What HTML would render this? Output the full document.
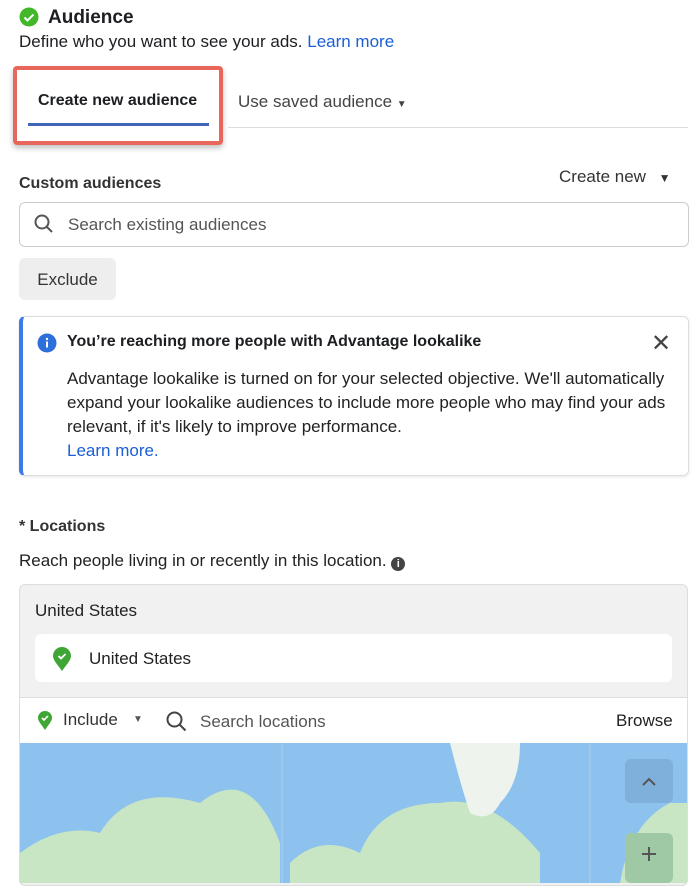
<!DOCTYPE html>
<html><head><style>
body{margin:0;width:700px;height:880px;overflow:hidden;background:#fff;font-family:"Liberation Sans",sans-serif;color:#1c1e21;position:relative}
.a{position:absolute;white-space:nowrap}
</style></head><body>
<svg class="a" style="left:19px;top:7px" width="20" height="20"><circle cx="10" cy="10" r="9.5" fill="#42b72a"/><path d="M5.5 10.5l3 3 6-6" stroke="#fff" stroke-width="2" fill="none"/></svg>
<div class="a" style="left:48px;top:7px;font-size:19px;font-weight:bold">Audience</div>
<div class="a" style="left:19px;top:32px;font-size:17px">Define who you want to see your ads. <span style="color:#1a5fd6">Learn more</span></div>
<div class="a" style="left:228px;top:127px;width:460px;height:1px;background:#dcdcdc"></div>
<div class="a" style="left:13px;top:66px;width:202px;height:71px;border:4px solid #e9675a;border-radius:4px;box-shadow:0 3px 6px rgba(0,0,0,.25)"></div>
<div class="a" style="left:38px;top:92px;font-size:16px;font-weight:bold">Create new audience</div>
<div class="a" style="left:28px;top:123px;width:181px;height:3px;background:#4166b7"></div>
<div class="a" style="left:238px;top:92px;font-size:17px;color:#444">Use saved audience <span style="font-size:10px">▼</span></div>
<div class="a" style="left:19px;top:175px;font-size:16px;font-weight:bold;color:#333">Custom audiences</div>
<div class="a" style="left:559px;top:167px;font-size:17px;color:#333">Create new <span style="font-size:12px;margin-left:8px">▼</span></div>
<div class="a" style="left:19px;top:202px;width:668px;height:43px;border:1px solid #ccc;border-radius:6px"></div>
<svg class="a" style="left:34px;top:214px" width="20" height="20"><circle cx="8" cy="8" r="6.5" stroke="#555" stroke-width="2" fill="none"/><path d="M13 13l5 5" stroke="#555" stroke-width="2"/></svg>
<div class="a" style="left:68px;top:215px;font-size:17px;color:#555">Search existing audiences</div>
<div class="a" style="left:19px;top:258px;width:97px;height:42px;background:#eeeeee;border-radius:6px;font-size:17px;line-height:44px;text-align:center;color:#333">Exclude</div>
<div class="a" style="left:19px;top:316px;width:665px;height:158px;border:1px solid #ddd;border-left:4px solid #3d7be8;border-radius:6px;box-shadow:0 1px 3px rgba(0,0,0,.1)"></div>
<svg class="a" style="left:37px;top:333px" width="20" height="20"><circle cx="10" cy="10" r="9.5" fill="#2d6fdb"/><rect x="9" y="8.5" width="2" height="6" fill="#fff"/><circle cx="10" cy="6" r="1.2" fill="#fff"/></svg>
<div class="a" style="left:67px;top:333px;font-size:16px;font-weight:bold">You’re reaching more people with Advantage lookalike</div>
<div class="a" style="left:651px;top:329px;font-size:24px;color:#444">✕</div>
<div class="a" style="left:67px;top:367px;font-size:17px;line-height:24px;color:#222">Advantage lookalike is turned on for your selected objective. We'll automatically<br>expand your lookalike audiences to include more people who may find your ads<br>relevant, if it's likely to improve performance.<br><span style="color:#1a5fd6">Learn more.</span></div>
<div class="a" style="left:19px;top:518px;font-size:16px;font-weight:bold;color:#333">* Locations</div>
<div class="a" style="left:19px;top:551px;font-size:17px;color:#222">Reach people living in or recently in this location. <span style="display:inline-block;width:14px;height:14px;border-radius:50%;background:#444;color:#fff;font-size:11px;line-height:14px;text-align:center;font-weight:bold;vertical-align:-1px">i</span></div>
<div class="a" style="left:19px;top:584px;width:667px;height:300px;border:1px solid #ddd;border-radius:6px;background:#f1f1f1;overflow:hidden">
 <div class="a" style="left:15px;top:16px;font-size:17px;color:#222">United States</div>
 <div class="a" style="left:15px;top:49px;width:637px;height:48px;background:#fff;border-radius:6px"></div>
 <svg class="a" style="left:31px;top:61px" width="22" height="26"><path d="M11 25C6 18 2 14 2 10a9 9 0 0 1 18 0c0 4-4 8-9 15z" fill="#3fa535"/><path d="M7.5 10l2.5 2.5 4.5-4.5" stroke="#fff" stroke-width="1.8" fill="none"/></svg>
 <div class="a" style="left:69px;top:64px;font-size:17px;color:#222">United States</div>
 <div class="a" style="left:0;top:112px;width:667px;height:45px;background:#fff;border-top:1px solid #ddd;border-bottom:1px solid #ddd"></div>
 <svg class="a" style="left:17px;top:125px" width="16" height="20"><path d="M8 20C4 14 1 11 1 8a7 7 0 0 1 14 0c0 3-3 6-7 12z" fill="#3fa535"/><path d="M5 8l2 2 4-4" stroke="#fff" stroke-width="1.6" fill="none"/></svg>
 <div class="a" style="left:43px;top:125px;font-size:17px;color:#333">Include</div>
 <div class="a" style="left:113px;top:129px;font-size:10px;color:#555">▼</div>
 <svg class="a" style="left:146px;top:126px" width="22" height="22"><circle cx="8.5" cy="8.5" r="7" stroke="#444" stroke-width="2" fill="none"/><path d="M13.5 13.5l6 6" stroke="#444" stroke-width="2"/></svg>
 <div class="a" style="left:180px;top:127px;font-size:17px;color:#555">Search locations</div>
 <div class="a" style="left:596px;top:126px;font-size:17px;color:#222">Browse</div>
 <svg class="a" style="left:0;top:158px" width="667" height="140">
  <rect width="667" height="140" fill="#8ec2ee"/>
  <path d="M0 110 Q40 80 80 90 Q110 40 180 60 Q230 20 260 100 L260 140 L0 140z" fill="#c9e6c4"/>
  <path d="M270 120 Q300 90 340 110 Q360 60 420 60 Q470 50 520 110 L520 140 L270 140z" fill="#c9e6c4"/>
  <path d="M430 0 L500 0 Q500 40 480 60 Q470 80 450 70 Q440 40 430 0z" fill="#eef3ee"/>
  <path d="M600 140 Q610 80 650 60 L667 60 L667 140z" fill="#c9e6c4"/>
  <path d="M262 0 V140 M570 0 V140" stroke="#a9cdef" stroke-width="1"/>
  <rect x="605" y="16" width="48" height="44" rx="6" fill="#7fb0dc"/>
  <path d="M623 42l6-6 6 6" stroke="#555" stroke-width="2" fill="none"/>
  <rect x="605" y="90" width="48" height="50" rx="6" fill="#9fc8a5"/>
  <path d="M629 104v14M622 111h14" stroke="#555" stroke-width="2"/>
 </svg>
</div>
</body></html>
